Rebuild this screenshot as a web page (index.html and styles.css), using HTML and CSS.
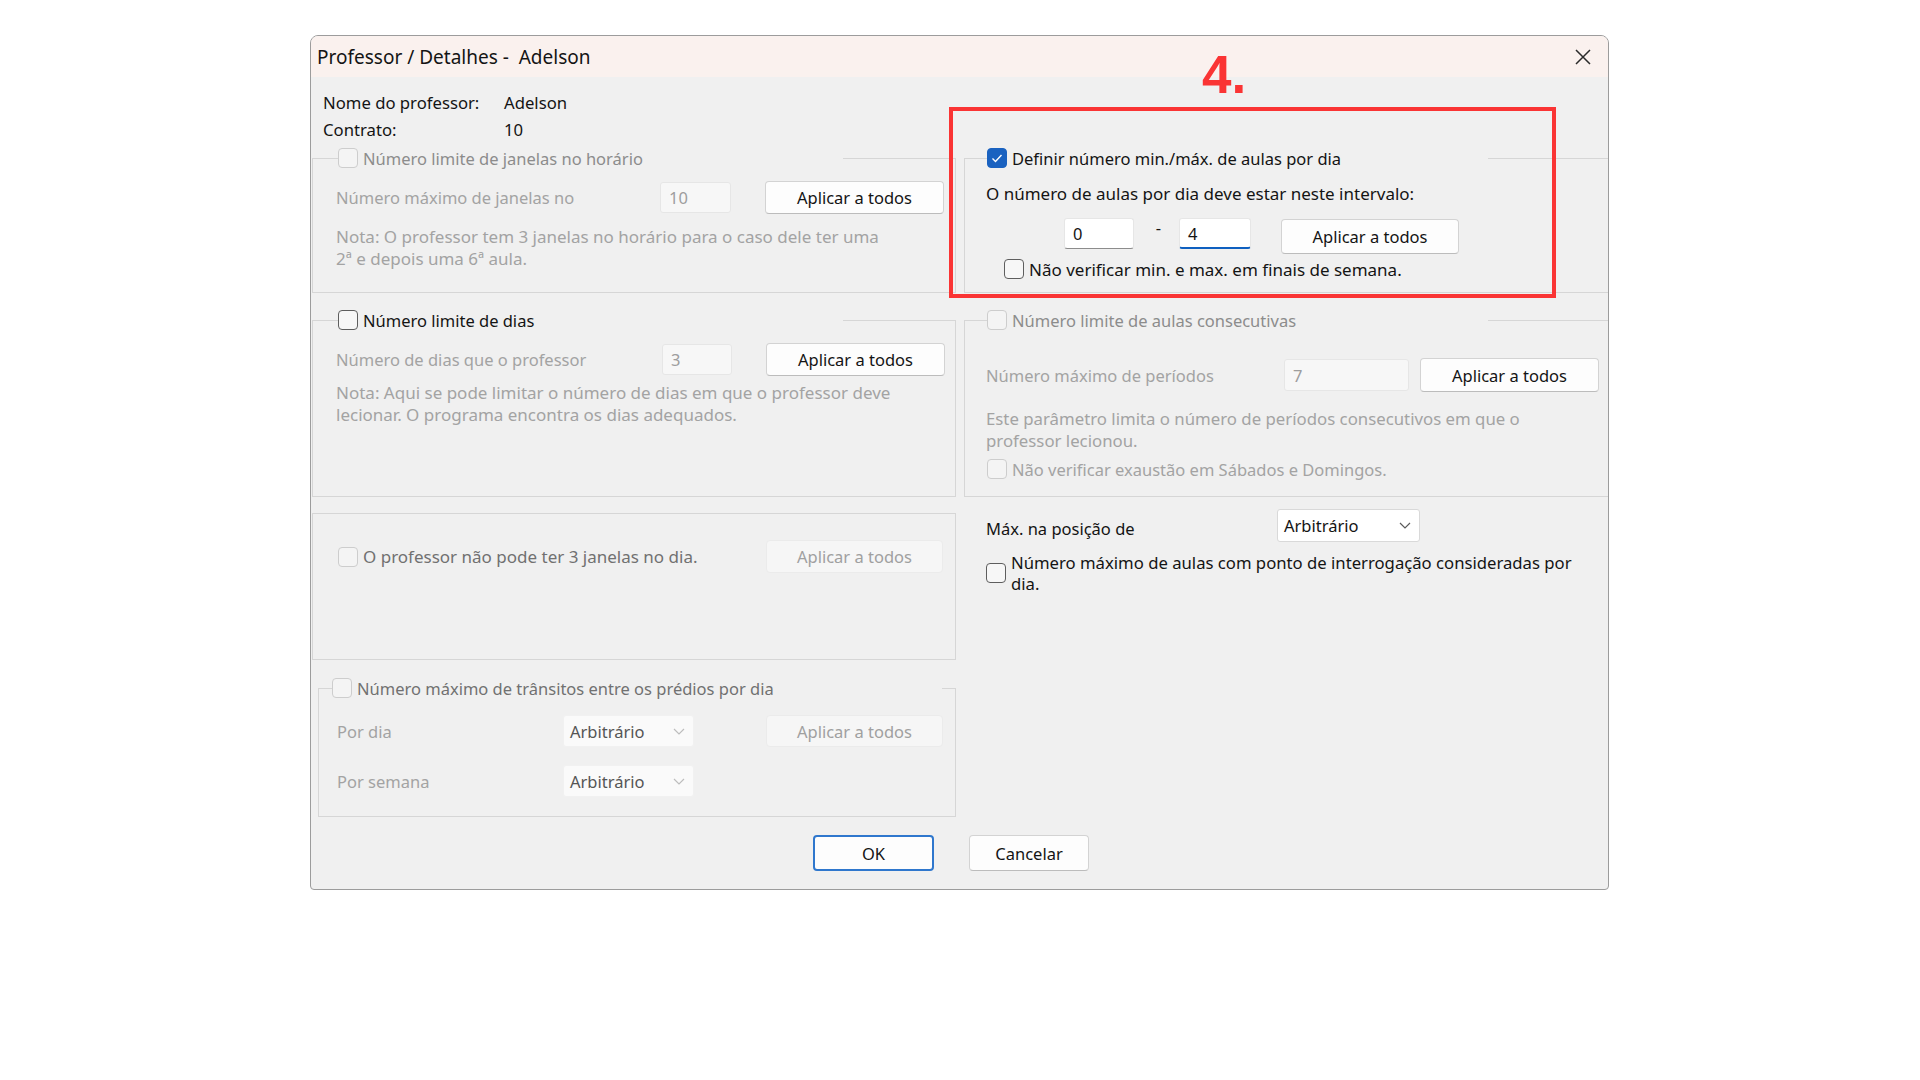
FILE: index.html
```html
<!DOCTYPE html>
<html lang="pt">
<head>
<meta charset="utf-8">
<title>Professor / Detalhes</title>
<link rel="stylesheet" href="styles.css">
</head>
<body>
<div class="dialog">
  <div class="titlebar">
    <span class="title">Professor / Detalhes -&nbsp; Adelson</span>
    <span class="close"><svg width="18" height="18" viewBox="0 0 18 18"><path d="M2 2 L16 16 M16 2 L2 16" stroke="#2b2b2b" stroke-width="1.5" fill="none"/></svg></span>
  </div>
  <div class="body">
    <div class="info">
      <span>Nome do professor:</span><span>Adelson</span>
      <span>Contrato:</span><span>10</span>
    </div>
    <div class="columns">
      <div class="col">
        <fieldset class="grp g1">
          <legend class="lg lg-l"><span class="cb dis"></span><span class="dim-legend">Número limite de janelas no horário</span></legend>
          <div class="row lrow">
            <span class="rlabel w324 dim">Número máximo de janelas no</span>
            <span class="inp dis w71">10</span>
            <span class="btn lbtn">Aplicar a todos</span>
          </div>
          <p class="note lnote dim">Nota: O professor tem 3 janelas no horário para o caso dele ter uma<br>2ª e depois uma 6ª aula.</p>
        </fieldset>

        <fieldset class="grp g2">
          <legend class="lg lg-l"><span class="cb"></span><span>Número limite de dias</span></legend>
          <div class="row lrow lrow2">
            <span class="rlabel w326 dim">Número de dias que o professor</span>
            <span class="inp dis w70">3</span>
            <span class="btn lbtn">Aplicar a todos</span>
          </div>
          <p class="note lnote lnote2 dim">Nota: Aqui se pode limitar o número de dias em que o professor deve<br>lecionar. O programa encontra os dias adequados.</p>
        </fieldset>

        <div class="box g3">
          <div class="row g3row">
            <span class="cbwrap"><span class="cb dis"></span><span class="dim-strong big">O professor não pode ter 3 janelas no dia.</span></span>
            <span class="btn dis g3btn">Aplicar a todos</span>
          </div>
        </div>

        <fieldset class="grp g4">
          <legend class="lg lg-4"><span class="cb dis"></span><span class="dim-strong">Número máximo de trânsitos entre os prédios por dia</span></legend>
          <div class="row g4row">
            <span class="rlabel w226 dim">Por dia</span>
            <span class="sel dis">Arbitrário<svg width="12" height="7" viewBox="0 0 12 7"><path d="M1 1 L6 6 L11 1" stroke="#bdbdbd" stroke-width="1.2" fill="none"/></svg></span>
            <span class="btn dis g4btn">Aplicar a todos</span>
          </div>
          <div class="row g4row g4row2">
            <span class="rlabel w226 dim">Por semana</span>
            <span class="sel dis">Arbitrário<svg width="12" height="7" viewBox="0 0 12 7"><path d="M1 1 L6 6 L11 1" stroke="#bdbdbd" stroke-width="1.2" fill="none"/></svg></span>
          </div>
        </fieldset>
      </div>

      <div class="col">
        <fieldset class="grp rg r1">
          <legend class="lg lg-r"><span class="cb on"><svg width="18" height="18" viewBox="0 0 18 18"><path d="M4.5 9.5 L7.5 12.5 L13.5 6" stroke="#fff" stroke-width="1.4" fill="none"/></svg></span><span>Definir número min./máx. de aulas por dia</span></legend>
          <p class="rtext big">O número de aulas por dia deve estar neste intervalo:</p>
          <div class="mm">
            <span class="inp w70">0</span>
            <span class="dash">-</span>
            <span class="inp focus w72">4</span>
            <span class="btn mmbtn">Aplicar a todos</span>
          </div>
          <div class="row cbrow mmcb"><span class="cb"></span><span class="big">Não verificar min. e max. em finais de semana.</span></div>
        </fieldset>

        <fieldset class="grp rg r2">
          <legend class="lg lg-r"><span class="cb dis"></span><span class="dim-legend">Número limite de aulas consecutivas</span></legend>
          <div class="row r2row">
            <span class="rlabel w298 dim">Número máximo de períodos</span>
            <span class="inp dis w125">7</span>
            <span class="btn r2btn">Aplicar a todos</span>
          </div>
          <p class="note rnote dim">Este parâmetro limita o número de períodos consecutivos em que o<br>professor lecionou.</p>
          <div class="row cbrow r2cb"><span class="cb dis"></span><span class="dim">Não verificar exaustão em Sábados e Domingos.</span></div>
        </fieldset>

        <div class="row mxrow">
          <span class="rlabel w291 mxlabel">Máx. na posição de</span>
          <span class="sel mxsel">Arbitrário<svg width="12" height="7" viewBox="0 0 12 7"><path d="M1 1 L6 6 L11 1" stroke="#5a5a5a" stroke-width="1.2" fill="none"/></svg></span>
        </div>
        <div class="row qrow"><span class="cb"></span><span class="qlabel">Número máximo de aulas com ponto de interrogação consideradas por<br>dia.</span></div>
      </div>
    </div>

    <div class="actions">
      <span class="btn default okbtn">OK</span>
      <span class="btn cbtn">Cancelar</span>
    </div>
  </div>

  <div class="annot-box"></div>
  <div class="annot-num">4.</div>
</div>
</body>
</html>
```

FILE: styles.css
```css
* { box-sizing: border-box; }
html, body { margin: 0; padding: 0; background: #ffffff; }
body {
  width: 1920px;
  height: 1080px;
  overflow: hidden;
  font-family: "Noto Sans", "Open Sans", sans-serif;
  font-size: 16.5px;
  color: #141414;
}
p { margin: 0; }

.dialog {
  position: relative;
  margin: 35px 0 0 310px;
  width: 1299px;
  height: 855px;
  border: 1px solid #9c9c9c;
  border-radius: 8px 8px 4px 4px;
  background: #f0f0f0;
  overflow: hidden;
}
.titlebar {
  height: 41px;
  background: #faf1ee;
  display: flex;
  align-items: center;
  justify-content: space-between;
  padding-left: 6px;
}
.title { font-size: 19px; padding-top: 1px; }
.close {
  width: 50px;
  height: 41px;
  display: flex;
  align-items: center;
  justify-content: center;
}

.body { padding-top: 12px; }
.info {
  display: grid;
  grid-template-columns: 181px auto;
  line-height: 27px;
  padding-left: 12px;
  font-size: 16.7px;
}
.columns {
  display: grid;
  grid-template-columns: 644px 644px;
  column-gap: 8px;
  padding-left: 1px;
  margin-top: 4px;
}

.grp {
  margin: 0;
  padding: 0;
  border: 1px solid #d6d6d6;
  min-inline-size: 0;
}
.lg {
  padding: 0;
  height: 22px;
  display: flex;
  align-items: center;
  gap: 5px;
  white-space: nowrap;
}
.lg-l { margin-left: 25px; width: 505px; }
.lg-r { margin-left: 22px; width: 501px; }
.lg-4 { margin-left: 13px; width: 610px; }

.box { border: 1px solid #d6d6d6; }

.row { display: flex; align-items: center; white-space: nowrap; }

.big { font-size: 17px; }
.dim { color: #a3a3a3; }
.dim-legend { color: #8c8c8c; }
.dim-strong { color: #717171; }

/* checkboxes */
.cb {
  width: 20px;
  height: 20px;
  flex: none;
  border-radius: 4px;
  border: 1px solid #5e5e5e;
  background: #f7f7f7;
  display: inline-flex;
  align-items: center;
  justify-content: center;
}
.cb.dis { border-color: #cdcdcd; background: #f4f4f4; }
.cb.on { background: #1a62c0; border-color: #1a62c0; }

/* inputs */
.inp {
  height: 31px;
  display: flex;
  align-items: center;
  padding-left: 8px;
  background: #ffffff;
  border: 1px solid #e6e6e6;
  border-bottom: 1px solid #8c8c8c;
  border-radius: 3px;
  flex: none;
}
.inp.focus { border-bottom: 2px solid #0f60c0; }
.inp.dis {
  background: #f7f7f7;
  border: 1px solid #e6e6e6;
  color: #9e9e9e;
}
.w70 { width: 70px; }
.w71 { width: 71px; }
.w72 { width: 72px; }
.w125 { width: 125px; height: 32px; }

/* buttons */
.btn {
  display: flex;
  align-items: center;
  justify-content: center;
  flex: none;
  background: #fdfdfd;
  border: 1px solid #d3d3d3;
  border-bottom-color: #bcbcbc;
  border-radius: 4px;
  color: #141414;
}
.btn.dis {
  background: #f6f6f6;
  border-color: #ebebeb;
  color: #a0a0a0;
}
.btn.default { border: 2px solid #2f77cd; }

/* selects */
.sel {
  display: flex;
  align-items: center;
  justify-content: space-between;
  flex: none;
  background: #ffffff;
  border: 1px solid #d9d9d9;
  border-radius: 3px;
  padding: 0 8px 0 6px;
}
.sel.dis { background: #fafafa; border-color: #f1f1f1; color: #555555; width: 131px; height: 32px; }

.rlabel { flex: none; }
.w324 { width: 324px; }
.w326 { width: 326px; }
.w226 { width: 226px; }
.w298 { width: 298px; }
.w291 { width: 291px; }

/* left group 1 */
.g1 { height: 146px; }
.lrow { margin-top: 11px; padding-left: 23px; height: 34px; }
.lbtn { margin-left: 34px; width: 179px; height: 33px; }
.note { line-height: 22px; white-space: nowrap; font-size: 17px; }
.lnote { margin-top: 12px; padding-left: 23px; }

/* left group 2 */
.g2 { margin-top: 16px; height: 188px; }
.lrow2 { margin-top: 11px; }
.lnote2 { margin-top: 6px; }

/* left group 3 */
.g3 { margin-top: 16px; height: 147px; padding-top: 26px; }
.g3row { padding-left: 25px; height: 33px; }
.cbwrap { display: flex; align-items: center; gap: 5px; width: 428px; flex: none; }
.g3btn { width: 177px; height: 33px; }

/* left group 4 */
.g4 { margin: 17px 0 0 6px; width: 638px; height: 140px; }
.g4row { margin-top: 16px; padding-left: 18px; height: 32px; }
.g4row2 { margin-top: 18px; }
.g4btn { margin-left: 72px; width: 177px; height: 32px; }

/* right groups */
.rg { border-right: 0; }
.r1 { height: 146px; }
.rtext { margin-top: 14px; padding-left: 21px; line-height: 22px; }
.mm {
  display: flex;
  align-items: flex-start;
  margin-top: 13px;
  padding-left: 99px;
  height: 36px;
}
.dash {
  width: 41px;
  margin-left: 4px;
  text-align: center;
  line-height: 20px;
  flex: none;
}
.mmbtn { margin-left: 30px; margin-top: 1px; width: 178px; height: 35px; }
.cbrow { gap: 5px; height: 22px; }
.mmcb { margin-top: 4px; padding-left: 39px; }

.r2 { margin-top: 16px; height: 188px; }
.r2row { margin-top: 27px; padding-left: 21px; height: 34px; }
.r2btn { margin-left: 11px; width: 179px; height: 34px; }
.rnote { margin-top: 16px; padding-left: 21px; font-size: 16.8px; }
.r2cb { margin-top: 6px; padding-left: 22px; }

.mxrow { margin-top: 12px; padding-left: 22px; height: 33px; }
.mxlabel { padding-top: 5px; }
.mxsel { width: 143px; height: 33px; }
.qrow { margin-top: 10px; padding-left: 22px; gap: 5px; }
.qlabel { line-height: 21px; font-size: 16.7px; }

/* bottom buttons */
.actions {
  display: flex;
  gap: 35px;
  padding-left: 502px;
  margin-top: 18px;
}
.okbtn { width: 121px; height: 36px; }
.cbtn { width: 120px; height: 36px; }

/* annotation overlay */
.annot-box {
  position: absolute;
  left: 638px;
  top: 71px;
  width: 607px;
  height: 191px;
  border: 4px solid #fa3434;
}
.annot-num {
  position: absolute;
  left: 891px;
  top: 12px;
  font-family: "Liberation Sans", Arial, sans-serif;
  font-weight: bold;
  font-size: 53px;
  line-height: 1;
  color: #fa3434;
}
```
